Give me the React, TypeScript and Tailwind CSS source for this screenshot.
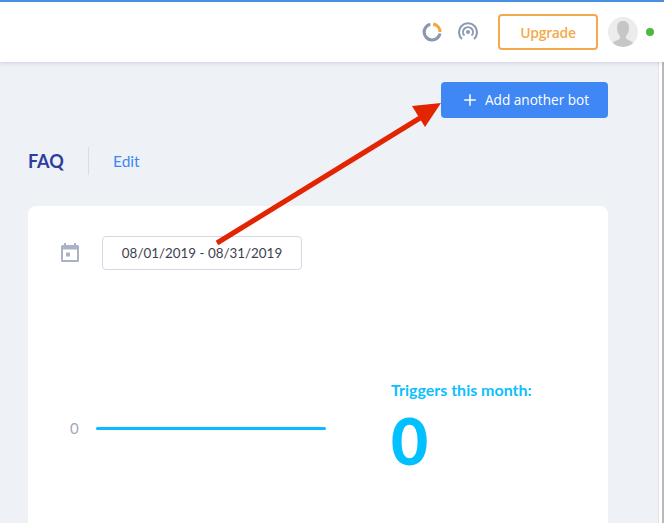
import { Plus } from 'lucide-react'

function LoadingRing() {
  return (
    <svg width="20" height="20" viewBox="0 0 20 20" fill="none" strokeWidth="3.2">
      <path d="M11.2 2.100 A8 8 0 0 1 18 10" stroke="#f5a742" />
      <path d="M18 11.500 A8 8 0 1 1 8.300 2.200" stroke="#8c97b2" />
    </svg>
  )
}

function BroadcastIcon() {
  return (
    <svg width="20" height="20" viewBox="0 0 20 20" fill="none" stroke="#8c97b2" strokeWidth="2">
      <path d="M4 17 A9 9 0 1 1 16 17" />
      <path d="M6.400 13.600 A5 5 0 1 1 13.600 13.600" />
      <circle cx="10" cy="10" r="2" fill="#8c97b2" stroke="none" />
    </svg>
  )
}

function Avatar() {
  return (
    <div className="w-[30px] h-[30px] rounded-full bg-[#ececec] overflow-hidden">
      <svg width="30" height="30" viewBox="0 0 30 30">
        <path d="M15 4c-4 0-6 2.500-6 7 0 3 1 6 3 8v2.500c-1.500 1.500-5 2.500-8 4.500v4h22v-4c-3-2-6.500-3-8-4.500V19c2-2 3-5 3-8 0-4.500-2-7-6-7z" fill="#c6c6c6" />
      </svg>
    </div>
  )
}

function CalendarIcon() {
  return (
    <svg width="20" height="20" viewBox="0 0 20 20" fill="#aab2c5">
      <path d="M4 0h2v2h8V0h2v2h1.500A1.500 1.500 0 0 1 19 3.500v14a1.500 1.500 0 0 1-1.500 1.500h-15A1.500 1.500 0 0 1 1 17.500v-14A1.500 1.500 0 0 1 2.500 2H4V0zm-1 6.500V17h14V6.500H3z" />
      <rect x="6" y="9.500" width="4" height="4" />
    </svg>
  )
}

export default function App() {
  return (
    <div className="relative w-[664px] h-[523px] overflow-hidden bg-[#eef1f6] font-['Lato',sans-serif]">
      {/* Top bar */}
      <div className="relative z-10 h-[62px] bg-white border-t-2 border-[#4a90e2] shadow-[0_1px_4px_rgba(100,110,140,0.25)] flex items-center justify-end">
        <div className="flex items-center">
          <LoadingRing />
          <div className="ml-[16px]">
            <BroadcastIcon />
          </div>
          <button className="ml-[20px] w-[100px] h-[36px] rounded border-2 border-[#f5a94e] text-[#f5a94e] text-[14px] font-semibold font-['Open_Sans',sans-serif] tracking-tight">
            Upgrade
          </button>
          <div className="ml-[10px]">
            <Avatar />
          </div>
          <div className="ml-[8px] mr-[10px] w-2 h-2 rounded-full bg-[#4cb944]" />
        </div>
      </div>

      <div className="flex h-[461px]">
        {/* Content */}
        <div className="w-[658px] pl-[28px] pr-[50px]">
          <div className="flex justify-end pt-[20px]">
            <button className="w-[167px] h-[36px] rounded bg-[#3f87f5] text-white text-[13.600px] flex items-center pl-[20px] gap-[6px] font-['Open_Sans',sans-serif]">
              <Plus size={18} strokeWidth={2} />
              <span className="pt-px">Add another bot</span>
            </button>
          </div>

          <div className="flex items-center mt-[29px] h-[28px]">
            <span className="text-[18px] font-bold text-[#2c3e9e] w-[60px]">FAQ</span>
            <div className="w-px h-[28px] bg-[#d9dde6]" />
            <span className="ml-[24px] pt-px text-[15.500px] text-[#3f87f5]">Edit</span>
          </div>

          <div className="mt-[31px] h-[400px] bg-white rounded-lg pl-[32px] pt-[30px]">
            <div className="flex items-center gap-[22px]">
              <CalendarIcon />
              <div className="w-[200px] h-[34px] rounded border border-[#d5d9e5] flex items-center justify-center text-[13.400px] text-[#3a3f4f]">
                08/01/2019 - 08/31/2019
              </div>
            </div>

            <div className="flex mt-[108px]">
              <div className="flex items-center h-[24px] mt-[38px] w-[331px]">
                <span className="ml-[10px] text-[15px] text-[#a3a7b8] w-[26px]">0</span>
                <div className="w-[230px] h-[3px] rounded-full bg-[#08bcff]" />
              </div>
              <div>
                <div className="text-[16px] font-bold text-[#0cc0ff] leading-[20px] mt-[2px]">Triggers this month:</div>
                <div className="text-[64px] font-black text-[#00c0ff] leading-[80px] mt-[1px]">0</div>
              </div>
            </div>
          </div>
        </div>

        {/* Scrollbar track */}
        <div className="w-[6px] bg-white border-l border-[#dfe2e8] flex justify-end">
          <div className="w-[2px] bg-[#b9b9b9]" />
        </div>
      </div>

      {/* Red annotation arrow */}
      <svg className="absolute left-0 top-0 z-20 pointer-events-none" width="664" height="523" viewBox="0 0 664 523" fill="none">
        <line x1="217" y1="243" x2="420" y2="118" stroke="#e32400" strokeWidth="5" />
        <polygon points="441,103 412,106 425,127" fill="#e32400" />
      </svg>
    </div>
  )
}
